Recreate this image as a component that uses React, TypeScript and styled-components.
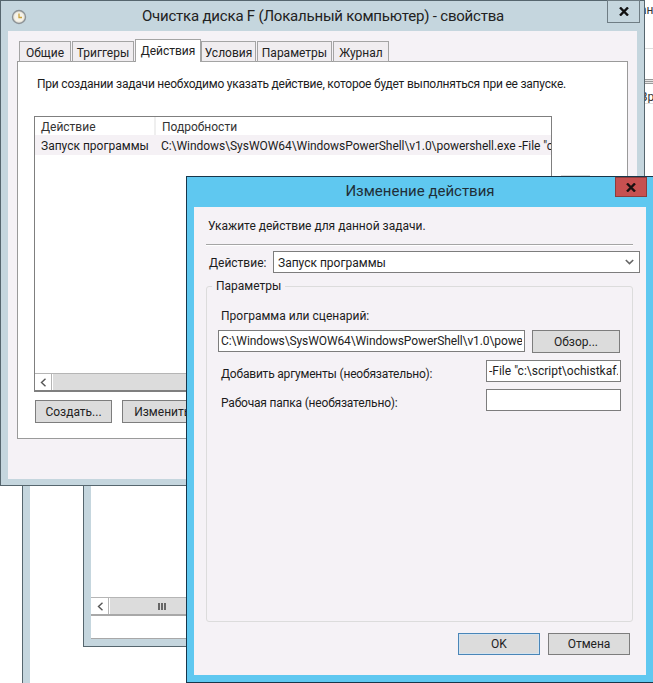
import React from 'react';
import styled, { createGlobalStyle } from 'styled-components';

const GlobalStyle = createGlobalStyle`
    html, body {
        margin: 0;
        padding: 0;
        background: #fff;
    }
    * {
        box-sizing: border-box;
    }
`;

const ClockIcon = () => (
    <svg width="16" height="16" viewBox="0 0 16 16">
        <circle cx="8" cy="8" r="6.5" fill="#e8e4d8" stroke="#8c9296" strokeWidth="1.4" />
        <circle cx="8" cy="8" r="4.6" fill="#f6f3ea" />
        <path d="M8 4.5V8.5H11" fill="none" stroke="#c9a23c" strokeWidth="1.3" />
    </svg>
);

const CloseIcon = () => (
    <svg width="10" height="9" viewBox="0 0 10 9">
        <path d="M1 .5L9 8.5M9 .5L1 8.5" fill="none" stroke="currentColor" strokeWidth="2.4" />
    </svg>
);

const ChevronLeft = () => (
    <svg width="7" height="9" viewBox="0 0 7 9">
        <path d="M5.5 .8L1.5 4.5L5.5 8.2" fill="none" stroke="#555" strokeWidth="1.4" />
    </svg>
);

const ChevronDown = () => (
    <svg width="9" height="6" viewBox="0 0 9 6">
        <path d="M.8 1L4.5 4.6L8.2 1" fill="none" stroke="#666" strokeWidth="1.6" />
    </svg>
);

const App = () => {
    return (
        <Desktop>
            <GlobalStyle />

            <BackWindow $left={22} $top={440} $width={200} $height={300}>
                <BackClient />
            </BackWindow>

            <BackWindow $left={83} $top={440} $width={400} $height={207}>
                <BackClient>
                    <BackSpacer />
                    <BackScroll>
                        <ScrollArrow><ChevronLeft /></ScrollArrow>
                        <ScrollThumb>
                            <Grip />
                        </ScrollThumb>
                    </BackScroll>
                    <BackStatus />
                </BackClient>
            </BackWindow>

            <RightStrip>
                <StripTitle>ан</StripTitle>
                <StripLine $top={48} />
                <StripGrip />
                <StripText>Вр</StripText>
                <StripLine $top={103} />
            </RightStrip>

            <MainWindow>
                <TitleBar $height={30}>
                    <TitleIcon><ClockIcon /></TitleIcon>
                    <MainTitle>Очистка диска F (Локальный компьютер) - свойства</MainTitle>
                    <GhostClose><CloseIcon /></GhostClose>
                </TitleBar>
                <MainClient>
                    <Tabs>
                        <Tab $width={52}>Общие</Tab>
                        <Tab $width={62}>Триггеры</Tab>
                        <Tab $width={66} $active>Действия</Tab>
                        <Tab $width={55}>Условия</Tab>
                        <Tab $width={75}>Параметры</Tab>
                        <Tab $width={56}>Журнал</Tab>
                    </Tabs>
                    <TabPanel>
                        <PanelIntro>При создании задачи необходимо указать действие, которое будет выполняться при ее запуске.</PanelIntro>
                        <ListRow>
                            <ActionList>
                                <ListHeader>
                                    <HeaderCell $width={121}>Действие</HeaderCell>
                                    <HeaderCell>Подробности</HeaderCell>
                                </ListHeader>
                                <ListItem>
                                    <ItemName>Запуск программы</ItemName>
                                    <ItemDetails>C:\Windows\SysWOW64\WindowsPowerShell\v1.0\powershell.exe -File "c:\script\ochistkaf.ps1"</ItemDetails>
                                </ListItem>
                                <ListFill />
                                <HScroll>
                                    <ScrollArrow><ChevronLeft /></ScrollArrow>
                                    <ScrollThumb />
                                </HScroll>
                            </ActionList>
                            <SideButton />
                        </ListRow>
                        <PanelButtons>
                            <Button $width={77} $height={23}>Создать...</Button>
                            <Button $width={90} $height={23}>Изменить...</Button>
                        </PanelButtons>
                    </TabPanel>
                </MainClient>
            </MainWindow>

            <Dialog>
                <TitleBar $height={30}>
                    <DialogTitle>Изменение действия</DialogTitle>
                    <RedClose><CloseIcon /></RedClose>
                </TitleBar>
                <DialogClient>
                    <DialogIntro>Укажите действие для данной задачи.</DialogIntro>
                    <Separator />
                    <ActionRow>
                        <ActionLabel>Действие:</ActionLabel>
                        <SelectBox>
                            <SelectValue>Запуск программы</SelectValue>
                            <ChevronDown />
                        </SelectBox>
                    </ActionRow>
                    <Group>
                        <GroupLegend>Параметры</GroupLegend>
                        <FieldLabel>Программа или сценарий:</FieldLabel>
                        <ProgramRow>
                            <PathInput $width={307} readOnly value={'C:\\Windows\\SysWOW64\\WindowsPowerShell\\v1.0\\powershell.exe'} />
                            <Button $width={88} $height={23}>Обзор...</Button>
                        </ProgramRow>
                        <ArgRow>
                            <RowLabel>Добавить аргументы (необязательно):</RowLabel>
                            <TextInput $width={135} readOnly value={'-File "c:\\script\\ochistkaf.ps1"'} />
                        </ArgRow>
                        <ArgRow>
                            <RowLabel>Рабочая папка (необязательно):</RowLabel>
                            <TextInput $width={135} readOnly value="" />
                        </ArgRow>
                    </Group>
                    <DialogFooter>
                        <Button $width={82} $height={22} $primary>OK</Button>
                        <Button $width={82} $height={22}>Отмена</Button>
                    </DialogFooter>
                </DialogClient>
            </Dialog>
        </Desktop>
    );
};

export default App;

const Desktop = styled.div`
    position: relative;
    width: 653px;
    height: 683px;
    overflow: hidden;
    background: #fff;
    color: #1c1c1c;
    font-family: Roboto, "Noto Sans", sans-serif;
    font-size: 12px;
    line-height: 16px;
`;

const BackWindow = styled.div<{ $left: number; $top: number; $width: number; $height: number }>`
    position: absolute;
    left: ${(p) => p.$left}px;
    top: ${(p) => p.$top}px;
    width: ${(p) => p.$width}px;
    height: ${(p) => p.$height}px;
    display: flex;
    border: 1px solid #56666e;
    background: #c5d6de;
    padding: 0 0 7px 7px;
`;

const BackClient = styled.div`
    flex: 1;
    display: flex;
    flex-direction: column;
    background: #fff;
    border-bottom: 1px solid #a8a8a8;
`;

const BackSpacer = styled.div`
    flex: 1;
`;

const BackStatus = styled.div`
    flex: none;
    height: 24px;
    border-top: 2px solid #a8a8a8;
`;

const Grip = styled.div`
    width: 8px;
    height: 7px;
    margin-left: 48px;
    background: repeating-linear-gradient(90deg, #666 0 2px, transparent 2px 3px);
`;

const RightStrip = styled.div`
    position: absolute;
    left: 645px;
    top: 0;
    width: 8px;
    height: 176px;
    overflow: hidden;
    background: #fff;
`;

const StripTitle = styled.div`
    position: absolute;
    left: -5px;
    top: 2px;
    font-size: 12px;
    color: #333;
`;

const StripLine = styled.div<{ $top: number }>`
    position: absolute;
    left: 0;
    right: 0;
    top: ${(p) => p.$top}px;
    height: 1px;
    background: #dedede;
`;

const StripGrip = styled.div`
    position: absolute;
    left: 0;
    right: 0;
    top: 79px;
    height: 5px;
    background: repeating-linear-gradient(180deg, #9a9a9a 0 1px, #e6e6e6 1px 2px);
`;

const StripText = styled.div`
    position: absolute;
    left: -5px;
    top: 89px;
    font-size: 12px;
    color: #333;
`;

const MainWindow = styled.div`
    position: absolute;
    left: 0;
    top: 0;
    width: 645px;
    height: 486px;
    display: flex;
    flex-direction: column;
    border: 1px solid #56666e;
    background: #c5d6de;
`;

const TitleBar = styled.div<{ $height: number }>`
    position: relative;
    flex: none;
    height: ${(p) => p.$height}px;
    display: flex;
    align-items: center;
    justify-content: center;
`;

const TitleIcon = styled.div`
    position: absolute;
    left: 10px;
    top: 8px;
    display: flex;
`;

const MainTitle = styled.div`
    font-size: 15px;
    letter-spacing: -0.2px;
    color: #222;
    margin-left: 1px;
    margin-top: -1px;
`;

const DialogTitle = styled.div`
    font-size: 15px;
    color: #1f2f38;
    margin-top: -3px;
`;

const GhostClose = styled.div`
    position: absolute;
    right: 4px;
    top: -1px;
    width: 33px;
    height: 23px;
    display: flex;
    align-items: center;
    justify-content: center;
    border: 1px solid #6f7d84;
    color: #111;
`;

const RedClose = styled.div`
    position: absolute;
    right: 6px;
    top: 0;
    width: 32px;
    height: 20px;
    display: flex;
    align-items: center;
    justify-content: center;
    background: #c75050;
    border: 1px solid #8d3c3c;
    color: #1a1010;
`;

const MainClient = styled.div`
    flex: 1;
    display: flex;
    flex-direction: column;
    margin: 0 7px 6px;
    padding: 9px 9px 40px;
    background: #f5f2f6;
`;

const Tabs = styled.div`
    flex: none;
    height: 22px;
    display: flex;
    align-items: flex-end;
    padding-left: 2px;
    position: relative;
    z-index: 1;
    margin-bottom: -1px;
`;

const Tab = styled.div<{ $width: number; $active?: boolean }>`
    width: ${(p) => p.$width}px;
    height: ${(p) => (p.$active ? 23 : 21)}px;
    margin-right: ${(p) => (p.$active ? 0 : 1)}px;
    padding-top: ${(p) => (p.$active ? 0 : 2)}px;
    display: flex;
    align-items: center;
    justify-content: center;
    border: 1px solid #a4a4a4;
    border-bottom: ${(p) => (p.$active ? 'none' : '1px solid #a4a4a4')};
    background: ${(p) => (p.$active ? '#fff' : '#f0edf0')};
    color: #222;
`;

const TabPanel = styled.div`
    flex: 1;
    display: flex;
    flex-direction: column;
    padding: 14px 16px 0;
    background: #fff;
    border: 1px solid #9a9a9a;
`;

const PanelIntro = styled.div`
    padding-left: 3px;
    white-space: nowrap;
    letter-spacing: -0.22px;
`;

const ListRow = styled.div`
    display: flex;
    gap: 9px;
    margin-top: 24px;
`;

const ActionList = styled.div`
    flex: none;
    width: 518px;
    height: 276px;
    display: flex;
    flex-direction: column;
    border: 1px solid #7f7f7f;
    border-bottom-width: 2px;
    background: #fff;
`;

const ListHeader = styled.div`
    flex: none;
    height: 18px;
    display: flex;
`;

const HeaderCell = styled.div<{ $width?: number }>`
    width: ${(p) => (p.$width ? `${p.$width}px` : 'auto')};
    padding: 2px 0 0 6px;
    border-right: ${(p) => (p.$width ? '2px solid #efefef' : 'none')};
    color: #333;
`;

const ListItem = styled.div`
    flex: none;
    height: 20px;
    display: flex;
    align-items: center;
    padding: 1px 0 0 6px;
    background: #f5f1f5;
    overflow: hidden;
    white-space: nowrap;
`;

const ItemName = styled.div`
    flex: none;
    width: 120px;
`;

const ItemDetails = styled.div`
    flex: none;
    letter-spacing: -0.05px;
`;

const ListFill = styled.div`
    flex: 1;
`;

const HScroll = styled.div`
    flex: none;
    height: 17px;
    display: flex;
    padding: 0 1px;
    background: #fff;
    border-top: 1px solid #b5b5b5;
`;

const BackScroll = styled(HScroll)`
    padding-left: 2px;
`;

const ScrollArrow = styled.div`
    flex: none;
    width: 16px;
    display: flex;
    align-items: center;
    justify-content: center;
    background: #fff;
    border-right: 1px solid #b5b5b5;
`;

const ScrollThumb = styled.div`
    flex: 1;
    margin-left: 1px;
    display: flex;
    align-items: center;
    background: #dcdcdc;
`;

const SideButton = styled.div`
    flex: none;
    width: 29px;
    height: 20px;
    margin-top: 59px;
    background: #dcdcdc;
`;

const PanelButtons = styled.div`
    display: flex;
    gap: 10px;
    margin-top: 8px;
    padding-left: 1px;
`;

const Button = styled.div<{ $width: number; $height: number; $primary?: boolean }>`
    flex: none;
    width: ${(p) => p.$width}px;
    height: ${(p) => p.$height}px;
    display: flex;
    align-items: center;
    justify-content: center;
    background: #dcdcdc;
    border: 1px solid ${(p) => (p.$primary ? '#4a86b8' : '#7d7d7d')};
    box-shadow: ${(p) => (p.$primary ? 'inset 0 0 0 1px #d4e3ee' : 'none')};
    color: #222;
`;

const Dialog = styled.div`
    position: absolute;
    left: 186px;
    top: 176px;
    width: 468px;
    height: 507px;
    display: flex;
    flex-direction: column;
    border: 1px solid #17364a;
    background: #5fc8f0;
`;

const DialogClient = styled.div`
    flex: 1;
    display: flex;
    flex-direction: column;
    margin: 0 7px 7px;
    padding: 11px 13px 20px 12px;
    background: #f5f2f6;
`;

const DialogIntro = styled.div`
    padding-left: 2px;
`;

const Separator = styled.div`
    flex: none;
    height: 2px;
    margin-top: 10px;
    border-top: 1px solid #a5a5a5;
    border-bottom: 1px solid #fff;
`;

const ActionRow = styled.div`
    display: flex;
    align-items: center;
    margin: 5px -7px 0 0;
`;

const ActionLabel = styled.div`
    flex: none;
    width: 67px;
    padding: 1px 0 0 3px;
`;

const SelectBox = styled.div`
    flex: 1;
    height: 22px;
    display: flex;
    align-items: center;
    justify-content: space-between;
    padding: 0 5px 0 4px;
    background: #fff;
    border: 1px solid #7d7d7d;
`;

const SelectValue = styled.span`
    padding-top: 1px;
`;

const Group = styled.fieldset`
    flex: 1;
    min-width: 0;
    margin: 5px 0 0;
    padding: 0 11px;
    border: 1px solid #dcdcdc;
    border-radius: 3px;
`;

const GroupLegend = styled.legend`
    margin-left: -6px;
    padding: 0 4px;
    line-height: 16px;
`;

const FieldLabel = styled.div`
    margin-top: 14px;
    padding-left: 3px;
`;

const ProgramRow = styled.div`
    display: flex;
    align-items: flex-start;
    gap: 7px;
    margin-top: 6px;
`;

const ArgRow = styled.div`
    display: flex;
    align-items: center;
    justify-content: space-between;
    margin-top: 7px;
`;

const RowLabel = styled.div`
    padding: 5px 0 0 3px;
    letter-spacing: -0.2px;
`;

const TextInput = styled.input<{ $width: number }>`
    flex: none;
    width: ${(p) => p.$width}px;
    height: 22px;
    margin: 0;
    padding: 0 2px;
    background: #fff;
    border: 1px solid #7d7d7d;
    border-radius: 0;
    outline: none;
    font: inherit;
    color: #222;
`;

const PathInput = styled(TextInput)`
    letter-spacing: -0.1px;
`;

const DialogFooter = styled.div`
    flex: none;
    display: flex;
    justify-content: flex-end;
    gap: 8px;
    margin-top: 11px;
    padding-right: 3px;
`;
